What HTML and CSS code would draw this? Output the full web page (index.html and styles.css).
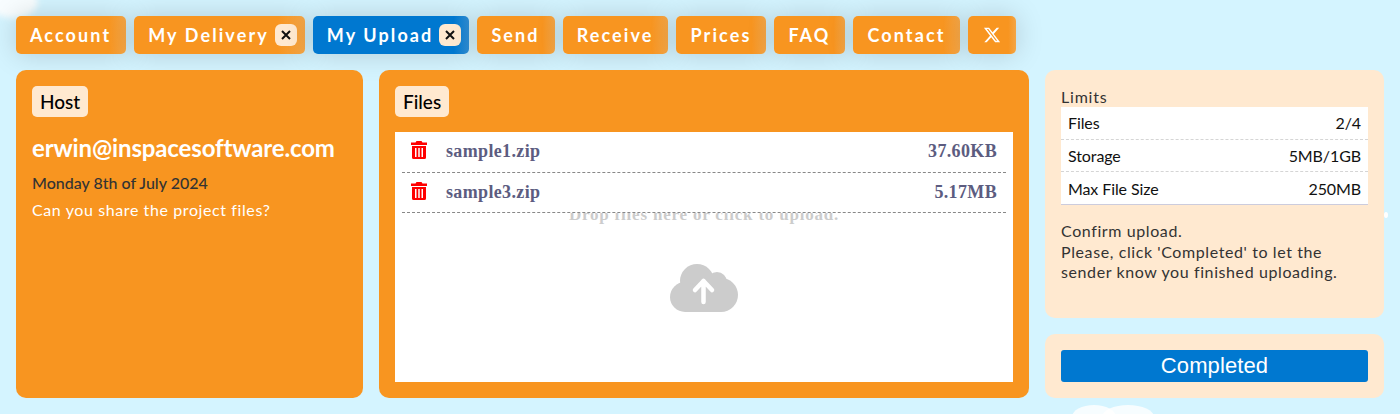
FILE: index.html
```html
<!DOCTYPE html>
<html lang="en">
<head>
    <meta charset="UTF-8">
    <meta name="viewport" content="width=device-width, initial-scale=1.0">
    <title>My Upload</title>
    <link rel="stylesheet" href="styles.css">
</head>
<body>

<!-- background clouds -->
<div class="cloud cloud-top"></div>
<div class="cloud cloud-bottom"></div>
<div class="cloud cloud-bottom-2"></div>
<div class="cloud cloud-dot"></div>

<nav class="tabs">
    <a class="tab">Account</a>
    <a class="tab tab-closable">My Delivery
        <span class="tab-close"><svg viewBox="0 0 12 12"><path d="M2 2l8 8M10 2l-8 8"/></svg></span>
    </a>
    <a class="tab tab-closable tab-active">My Upload
        <span class="tab-close"><svg viewBox="0 0 12 12"><path d="M2 2l8 8M10 2l-8 8"/></svg></span>
    </a>
    <a class="tab">Send</a>
    <a class="tab">Receive</a>
    <a class="tab">Prices</a>
    <a class="tab">FAQ</a>
    <a class="tab">Contact</a>
    <a class="tab tab-icon" aria-label="X">
        <svg viewBox="0 0 512 512"><path d="M389.2 48h70.6L305.6 224.2 487 464H345L233.7 318.6 106.5 464H35.8L200.7 275.5 26.8 48H172.4L272.9 180.9 389.2 48zM364.4 421.8h39.1L151.1 88h-42L364.4 421.8z"/></svg>
    </a>
</nav>

<main class="layout">
    <section class="panel host">
        <h2 class="chip">Host</h2>
        <div class="host-email">erwin@inspacesoftware.com</div>
        <div class="host-date">Monday 8th of July 2024</div>
        <div class="host-message">Can you share the project files?</div>
    </section>

    <section class="panel files">
        <h2 class="chip">Files</h2>
        <div class="files-box">
            <div class="dropzone">
                <div class="drop-text">Drop files here or click to upload.</div>
                <svg class="drop-icon" viewBox="0 0 68 48">
                    <g fill="#ccc">
                        <circle cx="27" cy="17" r="17"/>
                        <circle cx="47" cy="18" r="10"/>
                        <circle cx="15" cy="33" r="15"/>
                        <circle cx="51" cy="31" r="17"/>
                        <rect x="15" y="24" width="36" height="24"/>
                    </g>
                    <path d="M33.5 38V17M25 26l8.500-9 8.500 9" fill="none" stroke="#fff" stroke-width="4.500" stroke-linecap="round" stroke-linejoin="round"/>
                </svg>
            </div>
            <ul class="file-list">
                <li class="file-row">
                    <svg class="trash" viewBox="0 0 16 18"><path d="M5.500 0h5l1 1.500H16v2.500H0V1.500h4.500z"/><path fill-rule="evenodd" d="M1 5h14v11.500a1.500 1.500 0 0 1-1.500 1.500h-11A1.500 1.500 0 0 1 1 16.500zM4 7v9h1.500V7zM7.250 7v9h1.500V7zM10.500 7v9H12V7z"/></svg>
                    <span class="file-name">sample1.zip</span>
                    <span class="file-size">37.60KB</span>
                </li>
                <li class="file-row">
                    <svg class="trash" viewBox="0 0 16 18"><path d="M5.500 0h5l1 1.500H16v2.500H0V1.500h4.500z"/><path fill-rule="evenodd" d="M1 5h14v11.500a1.500 1.500 0 0 1-1.500 1.500h-11A1.500 1.500 0 0 1 1 16.500zM4 7v9h1.500V7zM7.250 7v9h1.500V7zM10.500 7v9H12V7z"/></svg>
                    <span class="file-name">sample3.zip</span>
                    <span class="file-size">5.17MB</span>
                </li>
            </ul>
        </div>
    </section>

    <aside class="side">
        <section class="side-card info">
            <div class="limits-title">Limits</div>
            <div class="limits">
                <div class="limit-row"><span>Files</span><span>2/4</span></div>
                <div class="limit-row"><span>Storage</span><span>5MB/1GB</span></div>
                <div class="limit-row"><span>Max File Size</span><span>250MB</span></div>
            </div>
            <p class="confirm">Confirm upload.</p>
            <p class="confirm-text">Please, click 'Completed' to let the sender know you finished uploading.</p>
        </section>
        <section class="side-card action">
            <button class="complete-btn">Completed</button>
        </section>
    </aside>
</main>

</body>
</html>
```

FILE: styles.css
```css
* {
    box-sizing: border-box;
}

html, body {
    height: 414px;
}

body {
    margin: 0;
    padding: 16px;
    overflow: hidden;
    position: relative;
    font-family: Lato, sans-serif;
    background-color: #d4f4ff;
}

.cloud {
    position: absolute;
    background-color: #fff;
}

.cloud-top {
    left: -12px;
    top: -14px;
    width: 50px;
    height: 32px;
    border-radius: 50%;
    filter: blur(3px);
    opacity: 0.85;
}

.cloud-bottom {
    left: 1072px;
    top: 405px;
    width: 44px;
    height: 24px;
    border-radius: 50%;
    opacity: 0.8;
}

.cloud-bottom-2 {
    left: 1102px;
    top: 405px;
    width: 52px;
    height: 24px;
    border-radius: 50%;
    opacity: 0.8;
}

.cloud-dot {
    left: 1384px;
    top: 212px;
    width: 4px;
    height: 6px;
    border-radius: 50%;
}

.tabs {
    position: relative;
    display: flex;
    gap: 8px;
    height: 38px;
}

.tab {
    display: flex;
    align-items: center;
    padding: 0 15px 0 14px;
    border-radius: 5px;
    color: #fff;
    font-size: 18px;
    font-weight: 700;
    letter-spacing: 2.1px;
    white-space: nowrap;
    background: linear-gradient(to right, #f89520 84%, #f3a546);
    box-shadow: 0 0 28px rgba(0, 0, 0, 0.17);
}

.tab-closable {
    padding-right: 8px;
    gap: 6px;
}

.tab-active {
    background: linear-gradient(to right, #0078d0 90%, #2f8cd2);
}

.tab-close {
    display: flex;
    align-items: center;
    justify-content: center;
    width: 22px;
    height: 22px;
    border-radius: 6px;
    background-color: #ffe9d0;
}

.tab-close svg {
    width: 12px;
    height: 12px;
    fill: none;
    stroke: #111;
    stroke-width: 2;
}

.tab-icon svg {
    width: 18px;
    height: 18px;
    fill: #fff;
}

.tab-icon {
    padding: 0 15px;
}

.layout {
    position: relative;
    display: grid;
    grid-template-columns: 347px 650px 339px;
    gap: 16px;
    height: 328px;
    margin-top: 16px;
}

.panel {
    background-color: #f89520;
    border-radius: 10px;
    padding: 16px;
}

.chip {
    display: inline-block;
    margin: 0;
    padding: 0 8px;
    height: 31px;
    line-height: 31px;
    border-radius: 5px;
    background-color: #ffe9d0;
    color: #000;
    font-size: 19px;
    font-weight: 500;
}

.host-email {
    margin-top: 15px;
    color: #fff;
    font-size: 24px;
    font-weight: 700;
    line-height: 32px;
    letter-spacing: -0.14px;
}

.host-date {
    margin-top: 9px;
    color: #333;
    font-size: 16px;
    font-weight: 500;
    line-height: 20px;
}

.host-message {
    margin-top: 7px;
    color: #fff;
    font-size: 16px;
    line-height: 20px;
    letter-spacing: 0.6px;
}

.files {
    display: flex;
    flex-direction: column;
    align-items: flex-start;
}

.files-box {
    display: grid;
    width: 618px;
    height: 250px;
    margin-top: 15px;
    background-color: #fff;
}

.dropzone, .file-list {
    grid-area: 1 / 1;
}

.dropzone {
    display: flex;
    flex-direction: column;
    align-items: center;
    padding-top: 74px;
}

.drop-text {
    color: #ccc;
    font-family: "Liberation Serif", serif;
    font-size: 17px;
    font-weight: 700;
    line-height: 18px;
    letter-spacing: 0.8px;
}

.drop-icon {
    width: 68px;
    height: 48px;
    margin-top: 40px;
}

.file-list {
    position: relative;
    align-self: start;
    height: 81px;
    margin: 0;
    padding: 0 7px;
    list-style: none;
    background-color: #fff;
}

.file-row {
    display: flex;
    align-items: center;
    height: 40.5px;
    padding: 0 9px;
    border-bottom: 1px dashed #888;
    font-family: "Liberation Serif", serif;
    font-size: 18px;
    font-weight: 700;
    letter-spacing: 0.35px;
    color: #5c5c80;
}

.trash {
    width: 16px;
    height: 18px;
    margin-right: 19px;
    fill: #f00;
    margin-top: -3px;
}

.file-size {
    margin-left: auto;
}

.side {
    display: flex;
    flex-direction: column;
    gap: 16px;
}

.side-card {
    background-color: #ffe9d0;
    border-radius: 10px;
    padding: 16px;
}

.info {
    height: 248px;
}

.limits-title {
    margin-top: 1px;
    color: #333;
    font-size: 16px;
    line-height: 20px;
    letter-spacing: 0.8px;
}

.limits {
    background-color: #fff;
    border-bottom: 1px solid #ccd;
}

.limit-row {
    display: flex;
    justify-content: space-between;
    align-items: center;
    height: 32.5px;
    padding: 0 7px;
    border-bottom: 1px dashed #d5d5d5;
    color: #111;
    font-size: 16px;
    letter-spacing: -0.1px;
}

.limit-row:last-child {
    height: 32px;
    border-bottom: none;
}

.confirm, .confirm-text {
    color: #333;
    font-size: 16px;
    line-height: 20px;
    letter-spacing: 0.6px;
}

.confirm {
    margin: 16px 0 0;
}

.confirm-text {
    margin: 1px 0 0;
}

.action {
    height: 64px;
}

.complete-btn {
    width: 100%;
    height: 32px;
    border: none;
    border-radius: 3px;
    padding: 0;
    background-color: #0078d0;
    color: #fff;
    font-family: "Liberation Sans", Arial, sans-serif;
    font-size: 22px;
    letter-spacing: 0.1px;
    cursor: pointer;
}
```
